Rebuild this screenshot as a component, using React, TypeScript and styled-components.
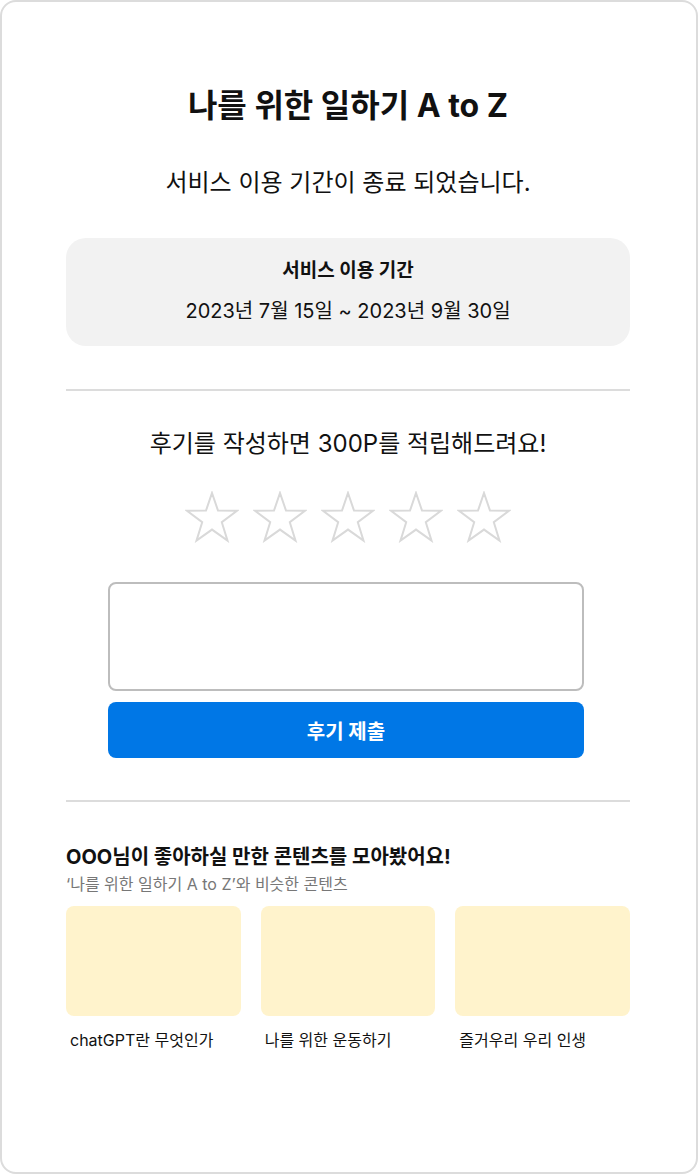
import React from "react";
import styled, { createGlobalStyle } from "styled-components";

const Global = createGlobalStyle`
  html, body { margin: 0; padding: 0; background: #fff; }
  body { font-family: "Inter", "Noto Sans CJK KR", sans-serif; color: #111; }
  * { box-sizing: border-box; }
`;

const Frame = styled.div`
  width: 698px;
  height: 1174px;
  border: 2px solid #dcdcdc;
  border-radius: 16px;
  padding: 0 66px 0 64px;
  display: flex;
  flex-direction: column;
  align-items: stretch;
`;

const Title = styled.h1`
  margin: 84px 0 0;
  font-size: 32px;
  font-weight: 700;
  line-height: 40px;
  text-align: center;
`;

const Subtitle = styled.p`
  margin: 41px 0 0;
  font-size: 24px;
  line-height: 32px;
  text-align: center;
  font-weight: 400;
`;

const PeriodBox = styled.div`
  margin-top: 39px;
  height: 108px;
  background: #f2f2f2;
  border-radius: 20px;
  display: flex;
  flex-direction: column;
  align-items: center;
  justify-content: center;
  gap: 14px;
`;

const PeriodLabel = styled.div`
  font-size: 19px;
  font-weight: 700;
  line-height: 24px;
`;

const PeriodValue = styled.div`
  font-size: 20px;
  line-height: 28px;
`;

const Divider = styled.hr<{ $top: number }>`
  margin: ${(p) => p.$top}px 0 0;
  border: none;
  border-top: 2px solid #dcdcdc;
  height: 0;
`;

const ReviewPrompt = styled.p`
  margin: 37px 0 0;
  font-size: 24px;
  line-height: 32px;
  text-align: center;
`;

const Stars = styled.div`
  margin-top: 31px;
  display: flex;
  justify-content: center;
  gap: 14px;
`;

const StarIcon = styled.svg`
  width: 54px;
  height: 52px;
  display: block;
`;

const ReviewForm = styled.div`
  margin-top: 39px;
  margin-left: 42px;
  width: 476px;
  display: flex;
  flex-direction: column;
  gap: 11px;
`;

const TextArea = styled.textarea`
  height: 109px;
  border: 2px solid #bdbdbd;
  border-radius: 8px;
  resize: none;
  font-family: inherit;
  font-size: 16px;
  padding: 10px;
  outline: none;
`;

const SubmitButton = styled.button`
  height: 56px;
  border: none;
  border-radius: 8px;
  background: #0077e6;
  color: #fff;
  font-family: inherit;
  font-size: 20px;
  font-weight: 700;
`;

const RecTitle = styled.h2`
  margin: 41px 0 0;
  font-size: 20px;
  font-weight: 700;
  line-height: 28px;
`;

const RecSub = styled.p`
  margin: 2px 0 0;
  font-size: 16px;
  line-height: 22px;
  color: #777;
`;

const Cards = styled.div`
  margin-top: 11px;
  display: grid;
  grid-template-columns: repeat(3, 1fr);
  gap: 20px;
`;

const Card = styled.div`
  display: flex;
  flex-direction: column;
`;

const Thumb = styled.div`
  height: 110px;
  background: #fff3cc;
  border-radius: 8px;
`;

const CardLabel = styled.div`
  margin-top: 13px;
  padding-left: 4px;
  font-size: 16px;
  line-height: 22px;
  color: #111;
`;

const Star = () => (
  <StarIcon viewBox="0 0 54 52">
    <path
      d="M27 2 L33 19.6 L52 19.8 L36.8 31.2 L42.5 49.6 L27 38.6 L11.5 49.6 L17.2 31.2 L2 19.8 L21 19.6 Z"
      fill="none"
      stroke="#d9d9d9"
      strokeWidth="2"
      strokeLinejoin="miter"
    />
  </StarIcon>
);

const contents = ["chatGPT란 무엇인가", "나를 위한 운동하기", "즐거우리 우리 인생"];

export default function App() {
  return (
    <>
      <Global />
      <Frame>
        <Title>나를 위한 일하기 A to Z</Title>
        <Subtitle>서비스 이용 기간이 종료 되었습니다.</Subtitle>
        <PeriodBox>
          <PeriodLabel>서비스 이용 기간</PeriodLabel>
          <PeriodValue>2023년 7월 15일 ~ 2023년 9월 30일</PeriodValue>
        </PeriodBox>
        <Divider $top={43} />
        <ReviewPrompt>후기를 작성하면 300P를 적립해드려요!</ReviewPrompt>
        <Stars>
          {[0, 1, 2, 3, 4].map((i) => (
            <Star key={i} />
          ))}
        </Stars>
        <ReviewForm>
          <TextArea />
          <SubmitButton>후기 제출</SubmitButton>
        </ReviewForm>
        <Divider $top={42} />
        <RecTitle>OOO님이 좋아하실 만한 콘텐츠를 모아봤어요!</RecTitle>
        <RecSub>‘나를 위한 일하기 A to Z’와 비슷한 콘텐츠</RecSub>
        <Cards>
          {contents.map((c) => (
            <Card key={c}>
              <Thumb />
              <CardLabel>{c}</CardLabel>
            </Card>
          ))}
        </Cards>
      </Frame>
    </>
  );
}
